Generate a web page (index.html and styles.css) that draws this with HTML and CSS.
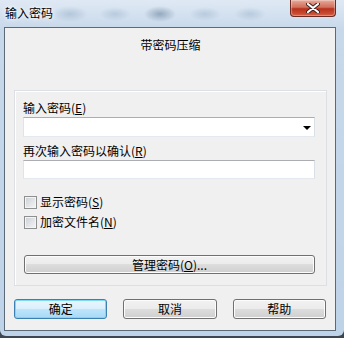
FILE: index.html
```html
<!DOCTYPE html>
<html lang="zh">
<head>
<meta charset="utf-8">
<title>输入密码</title>
<link rel="stylesheet" href="styles.css">
</head>
<body>
<div class="window">
  <div class="titlebar">
    <span class="title">输入密码</span>
    <span class="close"><svg width="14" height="10" viewBox="0 0 14 10"><path d="M2 1 L12 9 M12 1 L2 9" stroke="#3a2020" stroke-width="4" stroke-linecap="round"/><path d="M2 1 L12 9 M12 1 L2 9" stroke="#ffffff" stroke-width="2.2" stroke-linecap="round"/></svg></span>
  </div>
  <div class="client">
    <div class="heading">带密码压缩</div>
    <div class="panel">
      <div class="label">输入密码(<u>E</u>)</div>
      <div class="combo"><span class="arrow"></span></div>
      <div class="label second">再次输入密码以确认(<u>R</u>)</div>
      <div class="textbox"></div>
      <div class="checks">
        <label class="check"><span class="box"></span>显示密码(<u>S</u>)</label>
        <label class="check"><span class="box"></span>加密文件名(<u>N</u>)</label>
      </div>
      <div class="btn wide">管理密码(<u>O</u>)...</div>
    </div>
    <div class="actions">
      <div class="btn default">确定</div>
      <div class="btn">取消</div>
      <div class="btn">帮助</div>
    </div>
  </div>
</div>
</body>
</html>
```
FILE: styles.css
```css
html, body {
  margin: 0;
  padding: 0;
}
body {
  width: 344px;
  height: 338px;
  overflow: hidden;
  background: #3d4650;
  font-family: "Noto Sans CJK SC", "Noto Sans", sans-serif;
  font-size: 12px;
  color: #000;
}
.window {
  width: 344px;
  height: 336px;
  box-sizing: border-box;
  padding: 0 8px 0 4px;
  border-radius: 0 0 6px 6px;
  background:
    radial-gradient(ellipse 18px 8px at 70px 14px, rgba(120,150,180,0.35), transparent),
    radial-gradient(ellipse 16px 7px at 115px 14px, rgba(120,150,180,0.3), transparent),
    radial-gradient(ellipse 16px 8px at 160px 14px, rgba(70,100,130,0.45), transparent),
    radial-gradient(ellipse 16px 7px at 205px 14px, rgba(120,150,180,0.3), transparent),
    radial-gradient(ellipse 16px 7px at 250px 14px, rgba(120,150,180,0.3), transparent),
    linear-gradient(#dfe9f4, #c7d8ea 30px, #bfd3e8);
  display: flex;
  flex-direction: column;
}
.titlebar {
  height: 27px;
  display: flex;
  align-items: flex-start;
  justify-content: space-between;
  margin-right: -8px;
}
.title {
  margin: 5px 0 0 1px;
  line-height: 16px;
  color: #000;
  text-shadow: 0 0 6px #fff, 0 0 3px #fff;
}
.close {
  width: 46px;
  height: 17px;
  margin-right: 8px;
  box-sizing: border-box;
  border: 1px solid #6b2a22;
  border-top: none;
  border-radius: 0 0 4px 4px;
  background: linear-gradient(#e8a898, #d0705c 45%, #b8301c 55%, #d25a3c);
  display: flex;
  align-items: center;
  justify-content: center;
  box-shadow: inset 0 0 1px 1px rgba(255,255,255,0.35);
}
.client {
  flex: 1;
  background: #f0f0f0;
  border: 1px solid #5c6a78;
  margin-bottom: 5px;
  display: flex;
  flex-direction: column;
  padding: 0 8px 0 9px;
}
.heading {
  text-align: center;
  line-height: 16px;
  padding-top: 9px;
  height: 16px;
  margin-bottom: 37px;
}
.panel {
  border: 1px solid #dcdfe3;
  box-shadow: inset 1px 1px 0 #fff;
  padding: 9px 11px 11px 8px;
}
.label {
  line-height: 16px;
  height: 16px;
}
.label.second {
  margin-top: 6px;
}
u { text-decoration: underline; text-underline-offset: 1px; }
.combo {
  margin-top: 1px;
  height: 20px;
  box-sizing: border-box;
  border: 1px solid #abadb3;
  border-color: #abadb3 #dbdfe6 #e3e9ef #e2e3ea;
  background: #fff;
  display: flex;
  justify-content: flex-end;
  align-items: center;
  padding-right: 3px;
}
.arrow {
  width: 0;
  height: 0;
  border-left: 4px solid transparent;
  border-right: 4px solid transparent;
  border-top: 4px solid #000;
  margin-top: 1px;
}
.textbox {
  margin-top: 1px;
  height: 19px;
  box-sizing: border-box;
  border: 1px solid #abadb3;
  border-color: #abadb3 #dbdfe6 #e3e9ef #e2e3ea;
  background: #fff;
}
.checks {
  margin-top: 13px;
  display: flex;
  flex-direction: column;
}
.check {
  height: 20px;
  display: flex;
  align-items: center;
  padding-left: 1px;
  line-height: 16px;
}
.box {
  width: 13px;
  height: 13px;
  box-sizing: border-box;
  border: 1px solid #8e8f8f;
  background: linear-gradient(135deg, #cbcfd5, #f6f6f6);
  box-shadow: inset 0 0 0 1px #f4f4f4;
  margin-right: 3px;
}
.btn {
  height: 20px;
  box-sizing: border-box;
  border: 1px solid #707070;
  border-radius: 3px;
  background: linear-gradient(#f2f2f2, #ebebeb 50%, #dddddd 50%, #cfcfcf);
  box-shadow: inset 0 0 0 1px #fcfcfc;
  display: flex;
  align-items: center;
  justify-content: center;
  line-height: 16px;
}
.btn.wide {
  margin-top: 23px;
  margin-left: 1px;
  height: 19px;
}
.actions {
  margin-top: 13px;
  display: flex;
  gap: 16px;
  padding-right: 1px;
}
.actions .btn {
  width: 94px;
}
.btn.default {
  border-color: #3c7fb1;
  background: linear-gradient(#eaf6fd, #d9f0fc 50%, #bee6fd 50%, #a7d9f5);
  box-shadow: inset 0 0 0 1px #7dd8f5;
}
```
